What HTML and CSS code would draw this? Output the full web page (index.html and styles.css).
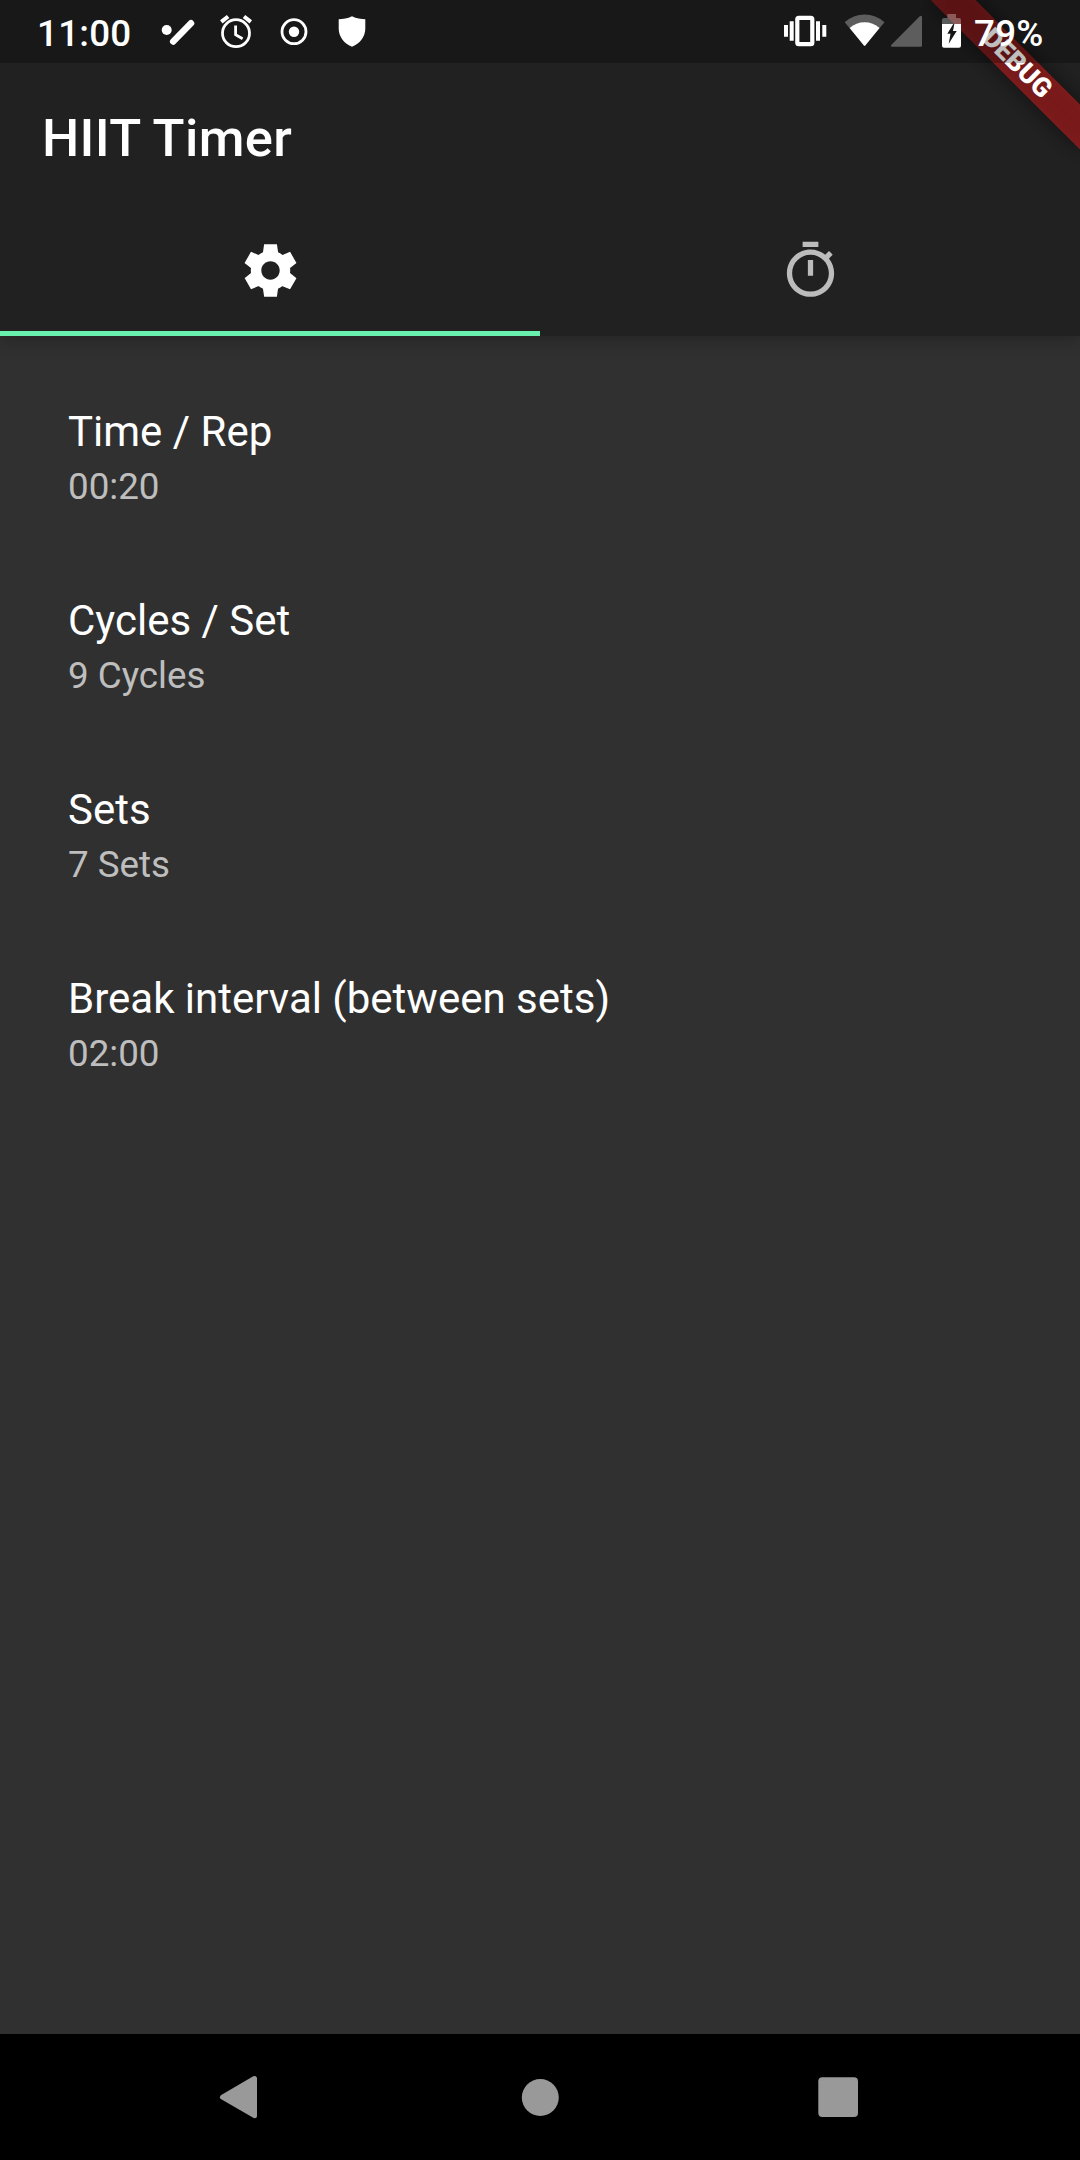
FILE: index.html
```html
<!DOCTYPE html>
<html lang="en">
<head>
<meta charset="utf-8">
<title>HIIT Timer</title>
<link rel="stylesheet" href="styles.css">
</head>
<body>
<div class="screen">
  <header class="appbar">
    <h1 class="appbar-title">HIIT Timer</h1>
    <nav class="tabs">
      <div class="tab tab-active">
        <svg class="tab-icon" viewBox="0 0 24 24"><path d="M19.44 12.99l-.01.02c.04-.33.08-.67.08-1.01 0-.34-.03-.66-.07-.99l.01.02 2.44-1.92-2.43-4.22-2.87 1.16.01.01c-.52-.4-1.09-.74-1.71-1h.01L14.44 2H9.57l-.44 3.07h.01c-.62.26-1.19.6-1.71 1l.01-.01-2.88-1.17-2.44 4.22 2.44 1.92.01-.02c-.04.33-.07.65-.07.99 0 .34.03.68.08 1.01l-.01-.02-2.1 1.65-.33.26 2.43 4.2 2.88-1.15-.02-.04c.53.41 1.1.75 1.73 1.01h-.03L9.58 22h4.85s.03-.18.06-.42l.38-2.65h-.01c.62-.26 1.2-.6 1.73-1.01l-.02.04 2.88 1.15 2.43-4.2s-.14-.12-.33-.26l-2.11-1.66zM12 15.5c-1.93 0-3.5-1.57-3.5-3.5s1.57-3.5 3.5-3.5 3.5 1.57 3.5 3.5-1.57 3.5-3.5 3.5z"/></svg>
      </div>
      <div class="tab">
        <svg class="tab-icon" viewBox="0 0 24 24"><path d="M15 1H9v2h6V1zm-4 13h2V8h-2v6zm8.03-6.61l1.42-1.42c-.43-.51-.9-.99-1.41-1.41l-1.42 1.42C16.07 4.74 14.12 4 12 4c-4.97 0-9 4.03-9 9s4.02 9 9 9 9-4.03 9-9c0-2.12-.74-4.07-1.97-5.61zM12 20c-3.87 0-7-3.13-7-7s3.13-7 7-7 7 3.13 7 7-3.13 7-7 7z"/></svg>
      </div>
    </nav>
  </header>

  <main class="settings">
    <section class="tile"><div class="tile-title">Time / Rep</div><div class="tile-value">00:20</div></section>
    <section class="tile"><div class="tile-title">Cycles / Set</div><div class="tile-value">9 Cycles</div></section>
    <section class="tile"><div class="tile-title">Sets</div><div class="tile-value">7 Sets</div></section>
    <section class="tile"><div class="tile-title">Break interval (between sets)</div><div class="tile-value">02:00</div></section>
  </main>

  <footer class="navbar">
    <svg class="nav-icon" viewBox="0 0 60 60"><path d="M10.500 30.200 42.500 11.500V48.700z" stroke-width="5" stroke-linejoin="round"/></svg>
    <svg class="nav-icon" viewBox="0 0 60 60"><circle cx="30.300" cy="30.500" r="18.500"/></svg>
    <svg class="nav-icon" viewBox="0 0 60 60"><rect x="10.300" y="10.300" width="39.700" height="39.700" rx="4"/></svg>
  </footer>

  <div class="banner">DEBUG</div>

  <div class="statusbar">
    <span class="clock">11:00</span>
    <div class="status-left">
      <svg class="status-icon" viewBox="149 0 58 63"><circle cx="166.700" cy="30" r="5"/><path class="pen" d="M173.200 41.500 191 23.300"/></svg>
      <svg class="status-icon" viewBox="207 0 58 63"><g class="line"><circle cx="236" cy="33.200" r="13.500"/><path d="M235.600 25.500v9.200l7 4"/><path class="bell" d="M221.300 21.900l6.800-5.400M244 16.500l6.800 5.400"/></g></svg>
      <svg class="status-icon" viewBox="265 0 58 63"><circle class="line" cx="294" cy="31.700" r="12"/><circle cx="294" cy="31.700" r="5.200"/></svg>
      <svg class="status-icon" viewBox="323 0 58 63"><path d="M352 16.300c4.500 2.200 9 3 13.300 3v9.500c0 8.500-6.300 15.500-13.300 18-7-2.500-13.300-9.500-13.300-18v-9.500c4.300 0 8.800-.8 13.300-3z"/></svg>
    </div>
    <div class="status-right">
      <svg class="status-icon" viewBox="776 0 58 63"><path d="M784 25h4v11.700h-4zM789.700 21.300h4v19.400h-4zM816 21.300h4v19.400h-4zM822.300 25h4v11.700h-4z"/><rect class="phone" x="797.300" y="17.800" width="15" height="26.400" rx="1.500"/></svg>
      <svg class="status-icon status-icon-wifi" viewBox="834 0 54 63"><path class="dim" d="M844.700 22.200a29.500 29.500 0 0 1 39.800 0L864.600 46z"/><path d="M849.700 28a22.500 22.500 0 0 1 29.800 0L865.500 45.200q-.9 1-1.800 0z"/></svg>
      <svg class="status-icon status-icon-signal" viewBox="888 0 42 63"><path class="dim" d="M922 17v28.500q0 1.300-1.300 1.300H892q-2-.2-.5-2L919.500 16.500q2-1.500 2.500.5z"/></svg>
      <svg class="status-icon status-icon-battery" viewBox="930 0 36 63"><path class="dim" d="M947.300 14h8.700v4h3q2 0 2 2v4h-19v-4q0-2 2-2h3.300z"/><path fill-rule="evenodd" d="M942 24h19v21.800q0 2-2 2h-15q-2 0-2-2zM953.300 24h1L953 31h3.700L948.700 43.700 950.500 33.700H947.300z"/></svg>
      <span class="battery-level">79%</span>
    </div>
  </div>
</div>
</body>
</html>
```
FILE: styles.css
```css
body {
  margin: 0;
  background: #303030;
  color: #fff;
  font-family: Roboto, "Liberation Sans", sans-serif;
}

svg {
  display: block;
  flex: none;
}

.screen {
  position: relative;
  display: flex;
  flex-direction: column;
  width: 1080px;
  height: 2160px;
  overflow: hidden;
}

.appbar {
  display: flex;
  flex-direction: column;
  box-sizing: border-box;
  height: 336px;
  padding-top: 63px;
  background: #212121;
  box-shadow: 0 5px 14px rgba(0, 0, 0, .22);
}

.appbar-title {
  margin: 0;
  padding-left: 42px;
  font-size: 52.5px;
  font-weight: 500;
  letter-spacing: .35px;
  line-height: 151px;
  height: 147px;
}

.tabs {
  display: flex;
  height: 126px;
}

.tab {
  display: flex;
  flex: 1;
  align-items: center;
  justify-content: center;
  box-sizing: border-box;
  border-bottom: 5px solid transparent;
}

.tab-active {
  border-bottom-color: #69f0ae;
}

.tab-icon {
  width: 63px;
  height: 63px;
  fill: rgba(255, 255, 255, .7);
}

.tab-active .tab-icon {
  fill: #fff;
}

.settings {
  flex: 1;
  padding-top: 26px;
}

.tile {
  box-sizing: border-box;
  height: 189px;
  padding: 45px 68px 0;
}

.tile-title {
  font-size: 42px;
  line-height: 49px;
}

.tile-value {
  margin-top: 9px;
  color: rgba(255, 255, 255, .7);
  font-size: 36.75px;
  line-height: 43px;
}

.navbar {
  display: flex;
  align-items: center;
  justify-content: center;
  gap: 238px;
  height: 126px;
  background: #000;
}

.nav-icon {
  width: 60px;
  height: 60px;
  fill: #999;
  stroke: #999;
  stroke-width: 0;
}

/* Diagonal ribbon pinned to the top right corner */
.banner {
  position: absolute;
  top: 73.5px;
  left: 975px;
  width: 210px;
  height: 31.5px;
  font-size: 26.775px;
  font-weight: 900;
  line-height: 31.5px;
  text-align: center;
  transform: rotate(45deg);
  transform-origin: 105px -73.5px;
}

.banner::before,
.banner::after {
  content: "";
  position: absolute;
  inset: 0;
}

.banner::before {
  z-index: -2;
  background: rgba(0, 0, 0, .5);
  filter: blur(10.4px);
}

.banner::after {
  z-index: -1;
  background: rgba(183, 28, 28, .627);
}

.statusbar {
  position: absolute;
  top: 0;
  left: 0;
  display: flex;
  align-items: center;
  justify-content: space-between;
  box-sizing: border-box;
  width: 1080px;
  height: 63px;
  padding: 0 38px 0 37px;
  background: rgba(0, 0, 0, .25);
  font-size: 36.75px;
  font-weight: 500;
  line-height: 67px;
}

.clock {
  width: 112px;
  height: 63px;
  letter-spacing: .25px;
}

.status-left {
  display: flex;
  flex: 1;
}

.status-right {
  display: flex;
  width: 266px;
  height: 63px;
}

.status-icon {
  width: 58px;
  height: 63px;
  fill: #fff;
}

.status-icon-wifi {
  width: 54px;
}

.status-icon-signal {
  width: 42px;
}

.status-icon-battery {
  width: 36px;
}

.battery-level {
  padding-left: 8px;
  letter-spacing: .25px;
}

.line {
  fill: none;
  stroke: #fff;
  stroke-width: 2.8;
}

.bell {
  stroke-width: 4;
}

.pen {
  stroke: #fff;
  stroke-width: 6.5;
  stroke-linecap: round;
}

.phone {
  fill: none;
  stroke: #fff;
  stroke-width: 4.2;
}

.dim {
  fill: rgba(255, 255, 255, .3);
}
```
